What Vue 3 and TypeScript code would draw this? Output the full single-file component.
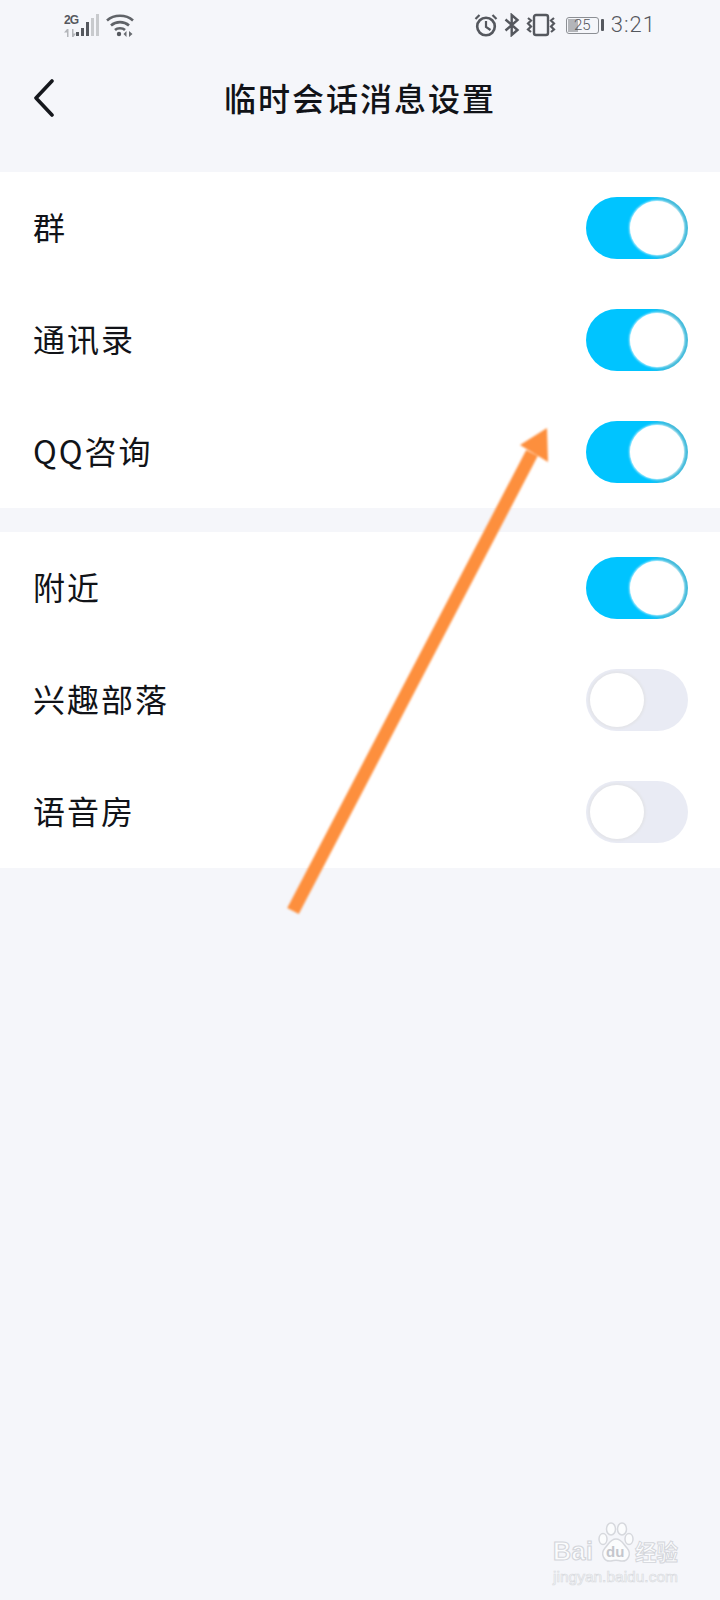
<script setup lang="ts">
interface Row { label: string; on: boolean }
const groups: Row[][] = [
  [
    { label: '群', on: true },
    { label: '通讯录', on: true },
    { label: 'QQ咨询', on: true },
  ],
  [
    { label: '附近', on: true },
    { label: '兴趣部落', on: false },
    { label: '语音房', on: false },
  ],
]
</script>

<template>
  <div class="page">
    <div class="status">
      <div class="status-left">
        <div class="net">
          <span class="net-g">2G</span>
          <svg width="12" height="8" viewBox="0 0 12 8" fill="#b4b6ba">
            <path d="M3 0v8h1.500V0zM3 0L0 3.500h3zM8 0v8h1.500V0zM9.500 8L12 4.500H9.500z" />
          </svg>
        </div>
        <svg class="signal" width="23" height="23" viewBox="0 0 23 23">
          <rect x="0" y="18" width="3" height="4" fill="#55585e" />
          <rect x="5" y="14" width="3" height="8" fill="#55585e" />
          <rect x="10" y="8" width="3" height="14" fill="#55585e" />
          <rect x="15" y="4" width="3" height="18" fill="#c8cacd" />
          <rect x="20" y="0" width="3" height="22" fill="#c8cacd" />
        </svg>
        <svg class="wifi" width="28" height="24" viewBox="0 0 28 24" fill="none" stroke="#606368" stroke-width="2.600">
          <path d="M1 7.500C8 1.200 20 1.200 27 7.500" />
          <path d="M5 12.500C10 8 18 8 23 12.500" />
          <path d="M9 17C11.500 14.600 16.500 14.600 19 17" />
          <circle cx="13" cy="21" r="2.200" fill="#55585e" stroke="none" />
          <path d="M20.500 18v6l-3-3zM23 18v6l3.500-3z" fill="#6a6d72" stroke="none" />
        </svg>
      </div>
      <div class="status-right">
        <svg width="24" height="24" viewBox="0 0 24 24" fill="none" stroke="#55585e" stroke-width="2.600">
          <circle cx="12" cy="13.500" r="8.800" />
          <path d="M12 8v6l4.500 3" stroke-width="2.200" />
          <path d="M1.500 6l4-4M22.500 6l-4-4" stroke-width="2.200" />
        </svg>
        <svg class="bt" width="16" height="24" viewBox="0 0 16 24" fill="none" stroke="#55585e" stroke-width="2.400">
          <path d="M1.500 6.500l12 10.500-5.800 5V2l5.800 5-12 10.500" />
        </svg>
        <svg class="vib" width="30" height="24" viewBox="0 0 30 24" fill="none" stroke="#55585e" stroke-width="2.200">
          <rect x="8" y="2" width="14" height="20" rx="2" stroke-width="2.400" />
          <path d="M2 5l3 2.500-3 3 3 3-3 3 3 2.500M28 5l-3 2.500 3 3-3 3 3 3-3 2.500" />
        </svg>
        <div class="battery">
          <div class="battery-body"><span class="battery-fill"></span><span class="battery-num">25</span></div>
          <span class="battery-cap"></span>
        </div>
        <span class="clock">3:21</span>
      </div>
    </div>

    <header class="nav">
      <svg class="back" width="22" height="38" viewBox="0 0 22 38" fill="none" stroke="#15171c" stroke-width="3.600" stroke-linecap="round" stroke-linejoin="round">
        <path d="M19 2L3 19l16 17" />
      </svg>
      <h1 class="title">临时会话消息设置</h1>
    </header>

    <section v-for="(group, g) in groups" :key="g" class="group">
      <div v-for="row in group" :key="row.label" class="row">
        <span class="label">{{ row.label }}</span>
        <span class="toggle" :class="row.on ? 'on' : 'off'"><span class="knob"></span></span>
      </div>
    </section>

    <svg class="arrow" width="720" height="1600" viewBox="0 0 720 1600">
      <g style="filter: blur(0.8px)">
        <path d="M293 911L532 453" stroke="#fd8f3d" stroke-width="13" fill="none" />
        <path d="M547 428L520 445 548 462z" fill="#fd8f3d" />
      </g>
    </svg>

    <div class="mark">
      <div class="mark-top">
        <span class="mark-ba">Bai</span>
        <span class="paw">
          <svg width="36" height="42" viewBox="0 0 36 42" fill="#fbfcfd" stroke="#d6d8dd" stroke-width="1.500">
            <ellipse cx="5" cy="17" rx="4" ry="5.500" />
            <ellipse cx="13" cy="7" rx="4.500" ry="6" />
            <ellipse cx="24" cy="7" rx="4.500" ry="6" />
            <ellipse cx="31" cy="17" rx="4" ry="5.500" />
            <path d="M18 17c6 0 7 5 11 9 5 6 1 14-6 13-3-1-7-1-10 0-7 1-11-7-6-13 4-4 5-9 11-9z" />
          </svg>
          <span class="paw-du">du</span>
        </span>
        <span class="mark-cn">经验</span>
      </div>
      <div class="mark-url">jingyan.baidu.com</div>
    </div>
  </div>
</template>

<style>
html, body { margin: 0; background: #f5f6fa; }
</style>

<style scoped>
.page {
  position: relative;
  width: 720px;
  height: 1600px;
  overflow: hidden;
  background: #f5f6fa;
  font-family: "Noto Sans CJK SC", "Noto Sans", sans-serif;
  color: #111318;
}
.status {
  height: 50px;
  display: flex;
  justify-content: space-between;
  align-items: center;
  padding: 0 64px 0 64px;
  box-sizing: border-box;
}
.status-left, .status-right { display: flex; align-items: center; }
.net { display: flex; flex-direction: column; width: 12px; height: 23px; justify-content: space-between; font-family: "Liberation Sans", sans-serif; }
.net-g { font-size: 12px; line-height: 12px; font-weight: 700; color: #55585e; letter-spacing: -0.8px; }
.signal { margin-left: 0; }
.wifi { margin-left: 7px; }
.status-right svg { flex: none; }
.bt { margin-left: 6px; }
.vib { margin-left: 6px; }
.battery { display: flex; align-items: center; margin-left: 10px; }
.battery-body {
  position: relative;
  width: 31px;
  height: 15px;
  border: 1.500px solid #8c8f94;
  border-radius: 3px;
  box-sizing: content-box;
}
.battery-fill { position: absolute; left: 1px; top: 1px; bottom: 1px; width: 10px; background: #b3b5b9; }
.battery-num {
  position: absolute;
  inset: 0;
  text-align: center;
  font: 300 15px/15px Roboto, sans-serif;
  color: #55585e;
}
.battery-cap { width: 3px; height: 12px; margin-left: 2px; background: #55585e; border-radius: 1px; }
.clock { margin-left: 7px; font: 300 22px/24px Roboto, sans-serif; letter-spacing: 1px; color: #55585e; }

.nav {
  position: relative;
  height: 98px;
  display: flex;
  align-items: center;
  justify-content: center;
}
.back { position: absolute; left: 33px; top: 29px; }
.title {
  margin: 0 0 5px;
  font-size: 32px;
  line-height: 44px;
  font-weight: 500;
  letter-spacing: 2px;
}
.group { margin-top: 24px; background: #fff; }
.row {
  height: 112px;
  display: flex;
  align-items: center;
  justify-content: space-between;
  padding: 0 32px 0 33px;
  box-sizing: border-box;
}
.label { margin-bottom: 5px; font-size: 32px; line-height: 44px; letter-spacing: 2px; }
.toggle {
  position: relative;
  display: block;
  width: 102px;
  height: 62px;
  border-radius: 31px;
}
.toggle.on { background: linear-gradient(90deg, #00c4ff 62%, #45bcdc 82%); }
.toggle.off { background: #e9ebf4; }
.knob {
  position: absolute;
  top: 4px;
  width: 54px;
  height: 54px;
  border-radius: 50%;
  background: #fff;
}
.on .knob { right: 4px; box-shadow: 0 0 2px 1px rgba(255, 255, 255, 0.7); }
.off .knob { left: 4px; box-shadow: 0 0 2px 2px #e4e5ea; }
.arrow { position: absolute; left: 0; top: 0; pointer-events: none; }
.mark {
  position: absolute;
  left: 553px;
  top: 1522px;
  width: 127px;
  color: #fbfcfd;
  font-family: "Liberation Sans", sans-serif;
}
.mark-top { display: flex; align-items: flex-end; height: 42px; }
.mark-ba {
  width: 45px;
  font-size: 25px;
  line-height: 26px;
  font-weight: 700;
  letter-spacing: 0.5px;
  -webkit-text-stroke: 1.100px #d3d5da;
}
.paw { position: relative; display: block; width: 36px; height: 42px; flex: none; }
.paw svg { display: block; }
.paw-du {
  position: absolute;
  left: 8px;
  top: 21px;
  font-size: 15px;
  line-height: 17px;
  font-weight: 700;
  color: #c4c6cc;
}
.mark-cn {
  margin-left: 1px;
  font-family: "Noto Sans CJK SC", sans-serif;
  font-size: 21.500px;
  line-height: 27px;
  font-weight: 700;
  white-space: nowrap;
  -webkit-text-stroke: 0.900px #d3d5da;
}
.mark-url {
  margin-top: 3px;
  font-size: 15.500px;
  line-height: 20px;
  white-space: nowrap;
  -webkit-text-stroke: 0.700px #d9dbe0;
}
</style>
